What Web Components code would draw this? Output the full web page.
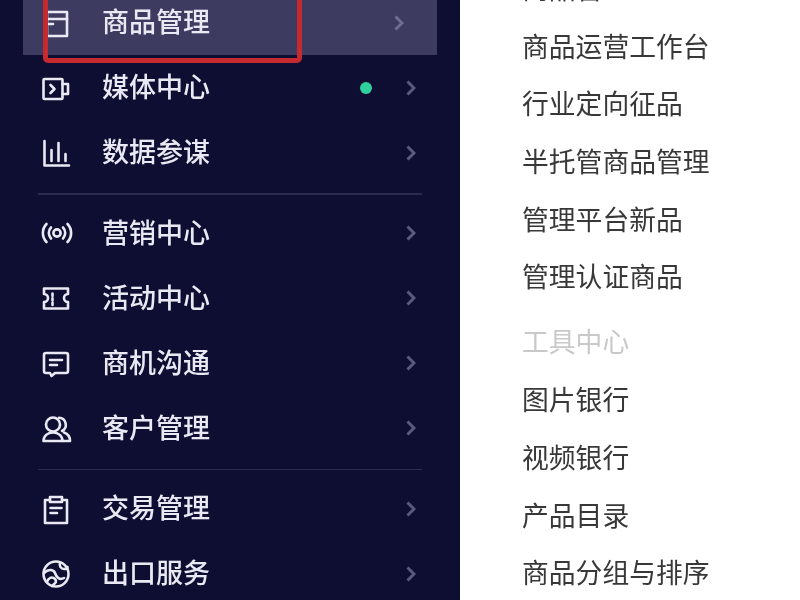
<!DOCTYPE html>
<html lang="zh">
<head>
<meta charset="utf-8">
<title>商品管理</title>
<style>
  html, body { margin: 0; height: 100%; background: #fff; overflow: hidden; }
</style>
</head>
<body>
<app-shell>
  <nav-item slot="nav" label="商品管理" icon="product" active></nav-item>
  <nav-item slot="nav" label="媒体中心" icon="video" dot></nav-item>
  <nav-item slot="nav" label="数据参谋" icon="bars"></nav-item>
  <nav-divider slot="nav"></nav-divider>
  <nav-item slot="nav" label="营销中心" icon="signal"></nav-item>
  <nav-item slot="nav" label="活动中心" icon="ticket"></nav-item>
  <nav-item slot="nav" label="商机沟通" icon="chat"></nav-item>
  <nav-item slot="nav" label="客户管理" icon="users"></nav-item>
  <nav-divider slot="nav"></nav-divider>
  <nav-item slot="nav" label="交易管理" icon="clipboard"></nav-item>
  <nav-item slot="nav" label="出口服务" icon="globe"></nav-item>

  <menu-link slot="menu">商品管理</menu-link>
  <menu-link slot="menu">商品运营工作台</menu-link>
  <menu-link slot="menu">行业定向征品</menu-link>
  <menu-link slot="menu">半托管商品管理</menu-link>
  <menu-link slot="menu">管理平台新品</menu-link>
  <menu-link slot="menu">管理认证商品</menu-link>
  <menu-link slot="menu" heading>工具中心</menu-link>
  <menu-link slot="menu">图片银行</menu-link>
  <menu-link slot="menu">视频银行</menu-link>
  <menu-link slot="menu">产品目录</menu-link>
  <menu-link slot="menu">商品分组与排序</menu-link>
</app-shell>

<script>
const ICONS = {
  product: '<path d="M5 3H25V27H5Z"/><path d="M5 10H25"/><path d="M5 15H11"/>',
  video: '<rect x="1.500" y="5" width="19" height="20" rx="1"/><path d="M20.500 10H26V20H20.500"/><path d="M8.500 11L12.500 15L8.500 19"/>',
  bars: '<path d="M2.500 2V26.500H27"/><path d="M9.500 11V22M16.500 4V22M23.500 15V22"/>',
  signal: '<circle cx="15" cy="14" r="3.600"/><path d="M9 8.500a8 8 0 0 0 0 11M21 8.500a8 8 0 0 1 0 11"/><path d="M4.500 5a13 13 0 0 0 0 18M25.500 5a13 13 0 0 1 0 18"/>',
  ticket: '<path d="M2 4.500H26V10a4 4 0 0 0 0 8V24.500H2V18a4 4 0 0 0 0-8Z"/><path d="M10.500 9.500V12M10.500 14V16.500M10.500 18.500V21"/>',
  chat: '<path d="M4 4H24a2 2 0 0 1 2 2V22a2 2 0 0 1-2 2H13L9.500 27L8 24H4a2 2 0 0 1-2-2V6a2 2 0 0 1 2-2Z"/><path d="M8 11H20M8 16H15"/>',
  users: '<circle cx="11" cy="10.500" r="7"/><path d="M1.500 27c0-5 4-8.500 9.500-8.500s9.500 3.500 9.500 8.500Z"/><path d="M17 3.800a7 7 0 0 1 3 13.200"/><path d="M22 18.500c3.500 1.200 6 4.500 6 8.500h-7"/>',
  clipboard: '<path d="M8 5H3V28H25V5H20"/><path d="M8 2H20V7H8Z"/><path d="M8.500 13H19.500M8.500 18H15"/>',
  globe: '<circle cx="14" cy="14" r="12.500"/><path d="M2 13c5-5 10-3 11 0s4 8 9 5"/><path d="M18 3c-1 3 1 6 4 6s4-1 3.500-2"/><path d="M5 22c1-4 5-6 8-3s-1 5-3 7"/>'
};

class AppShell extends HTMLElement {
  constructor() {
    super();
    this.attachShadow({ mode: 'open' }).innerHTML = `
      <style>
        :host { display: flex; margin-top: -40px; height: 640px; filter: blur(.55px);
                font-family: "Noto Sans CJK SC", "Liberation Sans", sans-serif; }
        .side { flex: 0 0 460px; box-sizing: border-box; padding: 30px 23px 0; background: #0e0e33; overflow: hidden; }
        .panel { flex: 1; padding-left: 62px; background: #fff; overflow: hidden; }
      </style>
      <div class="side"><slot name="nav"></slot></div>
      <div class="panel"><slot name="menu"></slot></div>`;
  }
}

class RedMark extends HTMLElement {
  constructor() {
    super();
    this.attachShadow({ mode: 'open' }).innerHTML = `
      <style>
        :host { display: block; position: absolute; left: 20px; top: -20px; width: 259px; height: 93px;
                box-sizing: border-box; border: 5px solid #c42a2e; border-radius: 5px; }
      </style>`;
  }
}

class NavItem extends HTMLElement {
  constructor() {
    super();
    const active = this.hasAttribute('active');
    const dot = this.hasAttribute('dot');
    this.attachShadow({ mode: 'open' }).innerHTML = `
      <style>
        :host { display: flex; align-items: center; position: relative; height: 65px; padding: 0 21px 0 19px;
                color: #e9e9f3; font-size: 27px; font-weight: 500; }
        :host([active]) { background: #3d3b60; padding-right: 33px; }
        svg.icon { flex: none; width: 28px; height: 28px; margin-right: 32px; fill: none; stroke: currentColor;
                   stroke-width: 2.600; stroke-linejoin: round; stroke-linecap: round; overflow: visible; }
        .label { flex: 1; line-height: 1; padding-bottom: 4px; }
        .dot { flex: none; width: 12px; height: 12px; border-radius: 50%; background: #2fd09a; margin-right: 34px; }
        svg.chev { flex: none; width: 10px; height: 16px; fill: none; stroke: #5b5a7e; stroke-width: 3; }
        :host([active]) svg.chev { stroke: #6e6d8e; }
      </style>
      <svg class="icon" viewBox="0 0 28 28" aria-hidden="true">${ICONS[this.getAttribute('icon')] || ''}</svg>
      <span class="label">${this.getAttribute('label') || ''}</span>
      ${dot ? '<span class="dot"></span>' : ''}
      <svg class="chev" viewBox="0 0 10 16" aria-hidden="true"><path d="M1.500 1.500L8 8L1.500 14.500"/></svg>
      ${active ? '<red-mark></red-mark>' : ''}`;
  }
}

class NavDivider extends HTMLElement {
  constructor() {
    super();
    this.attachShadow({ mode: 'open' }).innerHTML = `
      <style>
        :host { display: block; height: 15.500px; box-sizing: border-box; padding: 8px 15px 0; }
        div { height: 1.500px; background: #2b2b52; }
      </style><div></div>`;
  }
}

class MenuLink extends HTMLElement {
  constructor() {
    super();
    this.attachShadow({ mode: 'open' }).innerHTML = `
      <style>
        :host { display: flex; align-items: center; box-sizing: border-box; height: 57.700px; padding-bottom: 3px;
                color: #383838; font-size: 26.800px; }
        :host([heading]) { color: #c9c9c9; margin-top: 7.500px; }
      </style><slot></slot>`;
  }
}

customElements.define('red-mark', RedMark);
customElements.define('nav-item', NavItem);
customElements.define('nav-divider', NavDivider);
customElements.define('menu-link', MenuLink);
customElements.define('app-shell', AppShell);
</script>
</body>
</html>
